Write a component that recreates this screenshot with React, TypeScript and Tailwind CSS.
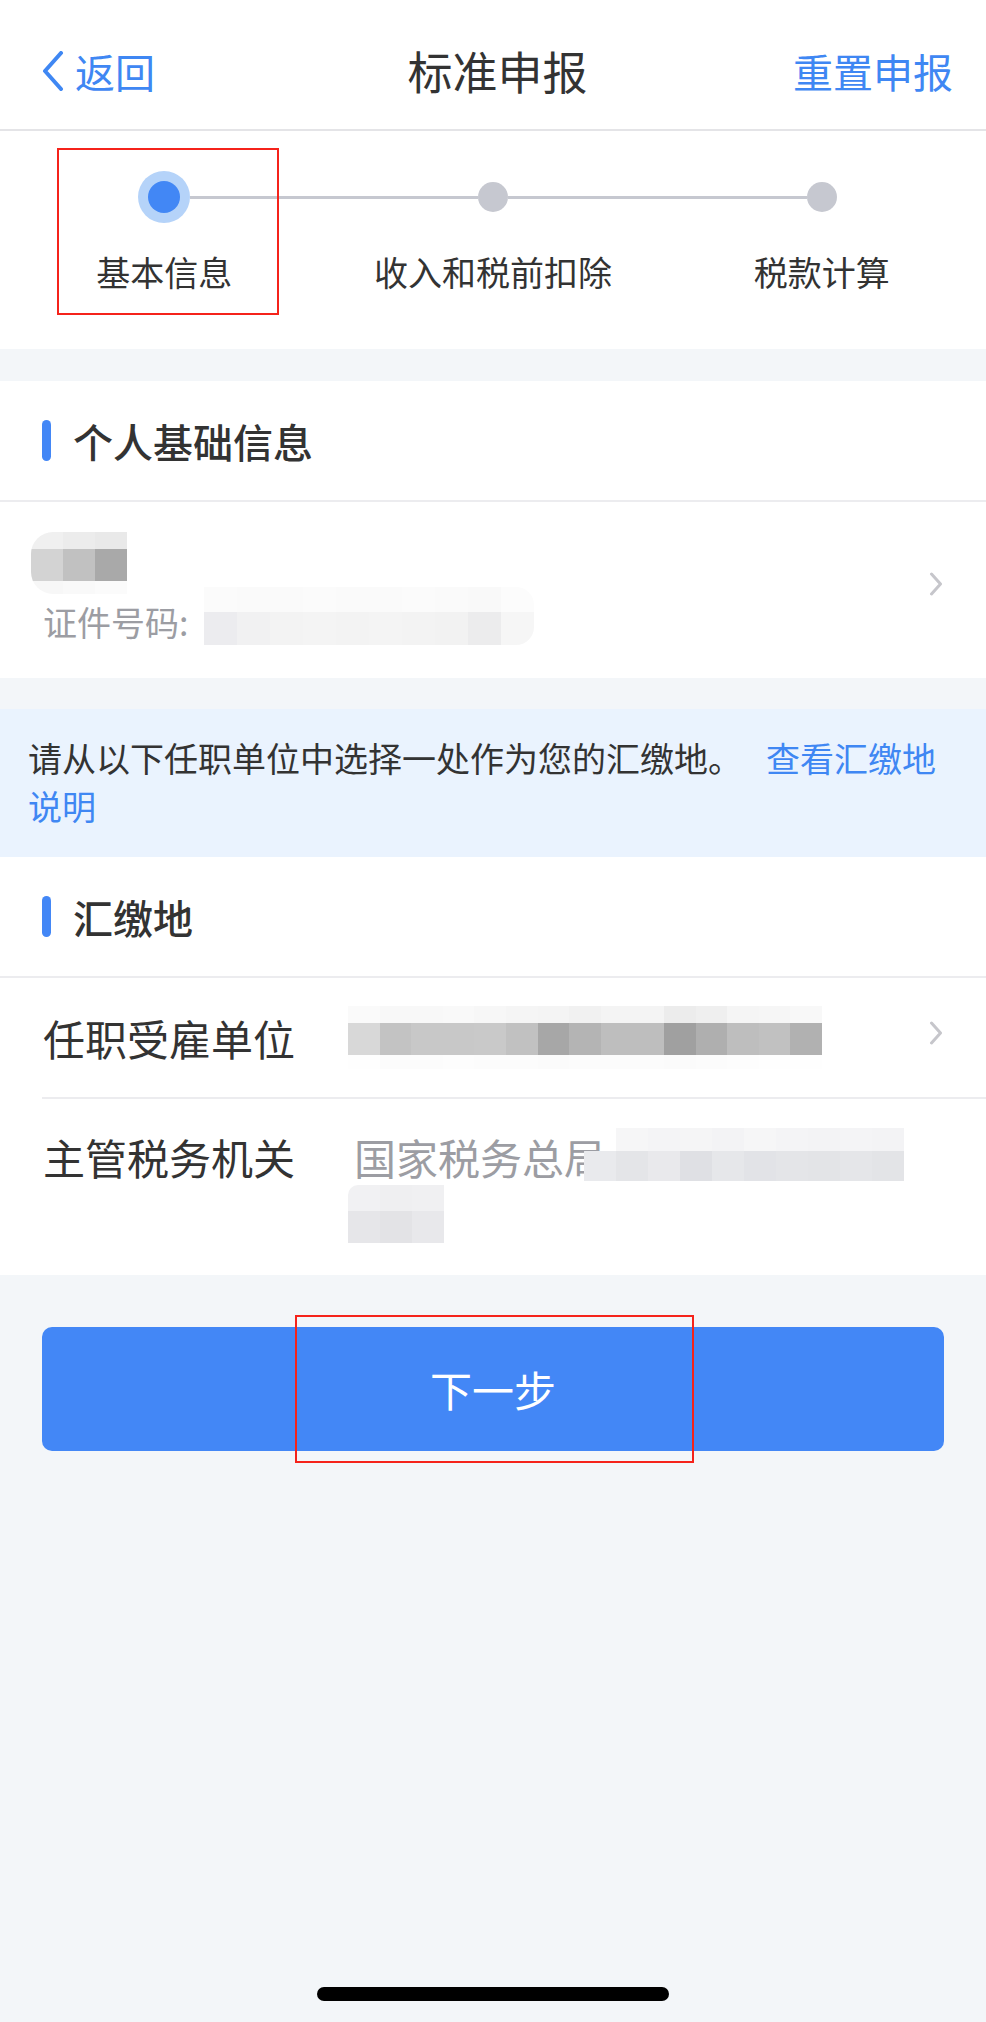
import React from "react";

const steps = ["基本信息", "收入和税前扣除", "税款计算"];

type MosaicRow = { h: string; cells: string[] };

// pixelated blocks standing in for the blurred private data
function Mosaic({
  rows,
  cell,
  className = "",
}: {
  rows: MosaicRow[];
  cell: string;
  className?: string;
}) {
  return (
    <div className={`flex flex-col overflow-hidden ${className}`}>
      {rows.map((row, i) => (
        <div key={i} className={`flex ${row.h}`}>
          {row.cells.map((c, j) => (
            <div key={j} className={`${cell} h-full ${c}`} />
          ))}
        </div>
      ))}
    </div>
  );
}

const nameRows: MosaicRow[] = [
  { h: "h-[17px]", cells: ["bg-[#f0f0f0]", "bg-[#ececec]", "bg-[#e9e9e9]"] },
  { h: "h-[32px]", cells: ["bg-[#d3d3d3]", "bg-[#c1c1c1]", "bg-[#a9a9a9]"] },
  { h: "h-[13px]", cells: ["bg-[#f7f7f7]", "bg-[#f9f9f9]", "bg-[#fbfbfb]"] },
];

const idRows: MosaicRow[] = [
  {
    h: "h-[25px]",
    cells: [
      "bg-[#fbfbfb]", "bg-[#fafafa]", "bg-[#fafafa]", "bg-[#fbfbfb]", "bg-[#fafafa]",
      "bg-[#fafafa]", "bg-[#fbfbfb]", "bg-[#fafafa]", "bg-[#f9f9f9]", "bg-[#fcfcfc]",
    ],
  },
  {
    h: "h-[33px]",
    cells: [
      "bg-[#ececef]", "bg-[#f1f1f2]", "bg-[#f3f3f3]", "bg-[#f4f4f4]", "bg-[#f3f3f3]",
      "bg-[#f4f4f4]", "bg-[#f3f3f3]", "bg-[#f2f2f2]", "bg-[#ececed]", "bg-[#f6f6f6]",
    ],
  },
];

const companyRows: MosaicRow[] = [
  {
    h: "h-[17px]",
    cells: [
      "bg-[#fafafa]", "bg-[#f8f8f8]", "bg-[#f8f8f8]", "bg-[#f9f9f9]", "bg-[#f7f7f7]",
      "bg-[#f5f5f5]", "bg-[#f4f4f4]", "bg-[#f1f1f1]", "bg-[#f4f4f4]", "bg-[#f4f4f4]",
      "bg-[#ececec]", "bg-[#efefef]", "bg-[#f5f5f5]", "bg-[#f6f6f6]", "bg-[#f8f8f8]",
    ],
  },
  {
    h: "h-[32px]",
    cells: [
      "bg-[#d8d8d8]", "bg-[#c3c3c3]", "bg-[#c8c8c8]", "bg-[#c8c8c8]", "bg-[#c9c9c9]",
      "bg-[#c1c1c1]", "bg-[#a7a7a7]", "bg-[#b4b4b4]", "bg-[#bebebe]", "bg-[#bebebe]",
      "bg-[#a0a0a0]", "bg-[#afafaf]", "bg-[#bebebe]", "bg-[#c1c1c1]", "bg-[#b1b1b1]",
    ],
  },
  {
    h: "h-[14px]",
    cells: [
      "bg-[#fefefe]", "bg-[#fcfcfc]", "bg-[#fcfcfc]", "bg-[#fdfdfd]", "bg-[#fcfcfc]",
      "bg-[#fcfcfc]", "bg-[#fbfbfb]", "bg-[#fcfcfc]", "bg-[#fcfcfc]", "bg-[#fcfcfc]",
      "bg-[#fbfbfb]", "bg-[#fcfcfc]", "bg-[#fdfdfd]", "bg-[#fefefe]", "bg-[#fefefe]",
    ],
  },
];

const officeRows: MosaicRow[] = [
  {
    h: "h-[23px]",
    cells: [
      "bg-transparent", "bg-[#f6f6f7]", "bg-[#f4f4f6]", "bg-[#f5f5f6]", "bg-[#f3f3f5]",
      "bg-[#f6f6f7]", "bg-[#f4f4f6]", "bg-[#f3f3f5]", "bg-[#f4f4f6]", "bg-[#f3f3f5]",
    ],
  },
  {
    h: "h-[30px]",
    cells: [
      "bg-[#e9eaed]", "bg-[#e4e5e8]", "bg-[#e9e9ec]", "bg-[#dfe0e4]", "bg-[#e6e7ea]",
      "bg-[#e2e3e7]", "bg-[#e4e5e8]", "bg-[#e3e4e7]", "bg-[#e5e6e9]", "bg-[#e3e4e7]",
    ],
  },
];

const office2Rows: MosaicRow[] = [
  { h: "h-[26px]", cells: ["bg-[#f1f1f3]", "bg-[#efeff1]", "bg-[#f0f0f2]"] },
  { h: "h-[32px]", cells: ["bg-[#e6e6e9]", "bg-[#e3e3e6]", "bg-[#e8e8eb]"] },
];

function BackChevron() {
  return (
    <svg width="22" height="40" viewBox="0 0 22 40" fill="none">
      <path
        d="M19 2 L3 20 L19 38"
        stroke="#3f87f3"
        strokeWidth="4"
        strokeLinecap="round"
        strokeLinejoin="round"
      />
    </svg>
  );
}

function RowChevron({ className = "" }: { className?: string }) {
  return (
    <svg width="14" height="24" viewBox="0 0 14 24" fill="none" className={className}>
      <path
        d="M2.5 2 L11.5 12 L2.5 22"
        stroke="#c6c6cb"
        strokeWidth="3"
        strokeLinecap="round"
        strokeLinejoin="round"
      />
    </svg>
  );
}

function SectionTitle({ title }: { title: string }) {
  return (
    <div className="flex h-[121px] items-center gap-[22px] border-b-2 border-[#ececef] bg-white pl-[42px]">
      <span className="h-[41px] w-[9px] rounded-full bg-[#4387f6]" />
      <span className="text-[40px] font-medium leading-none text-[#333333]">{title}</span>
    </div>
  );
}

export default function App() {
  return (
    <div className="flex min-h-[2022px] flex-col bg-[#f3f6f9] font-['Noto_Sans_CJK_SC',sans-serif]">
      {/* nav bar */}
      <div className="flex h-[131px] items-center border-b-2 border-[#e4e4e7] bg-white pt-[12px]">
        <div className="flex flex-1 items-center gap-[11px] pl-[42px] text-[40px] leading-none text-[#3f87f3]">
          <BackChevron />
          <span>返回</span>
        </div>
        <div className="text-[45px] leading-none text-[#333333]">标准申报</div>
        <div className="flex flex-1 justify-end pr-[33px] text-[40px] leading-none text-[#3f87f3]">
          重置申报
        </div>
      </div>

      {/* steps */}
      <div className="relative grid grid-cols-3 bg-white pt-[40px] pb-[53px]">
        {steps.map((s, i) => (
          <div key={s} className="flex flex-col items-center">
            <div className="flex h-[52px] w-full items-center">
              <div className={i === 0 ? "h-[3px] flex-1" : "h-[3px] flex-1 bg-[#c6c8d0]"} />
              {i === 0 ? (
                <div className="flex h-[52px] w-[52px] items-center justify-center rounded-full bg-[#b5d3f9]">
                  <div className="h-[32px] w-[32px] rounded-full bg-[#4287f5]" />
                </div>
              ) : (
                <div className="h-[30px] w-[30px] rounded-full bg-[#c6c8d0]" />
              )}
              <div className={i === 2 ? "h-[3px] flex-1" : "h-[3px] flex-1 bg-[#c6c8d0]"} />
            </div>
            <div className="mt-[25px] text-[34px] leading-[48px] text-[#333333]">{s}</div>
          </div>
        ))}
        <div className="pointer-events-none absolute left-[57px] top-[17px] h-[167px] w-[222px] border-2 border-[#f5231b]" />
      </div>

      {/* personal info */}
      <div className="mt-[32px]">
        <SectionTitle title="个人基础信息" />
        <div className="flex h-[176px] items-center justify-between bg-white pl-[43px] pr-[43px] pt-[30px] pb-[33px]">
          <div className="flex flex-col self-stretch">
            <Mosaic rows={nameRows} cell="w-[32px]" className="-ml-[12px] w-fit rounded-l-[22px]" />
            <div className="-mt-[7px] flex h-[58px] items-center gap-[16px]">
              <span className="mt-[12px] text-[34px] leading-none text-[#9c9da3]">证件号码:</span>
              <Mosaic rows={idRows} cell="w-[33px]" className="rounded-r-[18px]" />
            </div>
          </div>
          <RowChevron className="mb-[10px]" />
        </div>
      </div>

      {/* hint banner */}
      <div className="mt-[31px] bg-[#eaf3fe] px-[28px] pt-[25px] pb-[27px] text-[34px] leading-[48px] text-[#333333]">
        请从以下任职单位中选择一处作为您的汇缴地。
        <span className="ml-[24px] text-[#3f87f3]">查看汇缴地</span>
        <span className="text-[#3f87f3]">说明</span>
      </div>

      {/* payment location */}
      <div>
        <SectionTitle title="汇缴地" />
        <div className="bg-white">
          <div className="flex h-[119px] items-center pl-[43px] pr-[43px]">
            <span className="w-[305px] shrink-0 text-[42px] leading-none text-[#333333]">任职受雇单位</span>
            <div className="flex-1">
              <Mosaic rows={companyRows} cell="w-[31.6px]" className="w-fit" />
            </div>
            <RowChevron className="-mt-[10px]" />
          </div>
          <div className="ml-[42px] h-[2px] bg-[#ececef]" />
          <div className="flex h-[176px] items-start pl-[43px] pr-[43px] pt-[29px]">
            <span className="w-[305px] shrink-0 text-[42px] leading-[57px] text-[#333333]">主管税务机关</span>
            <div className="flex flex-col">
              <div className="flex h-[57px] items-start">
                <span className="ml-[6px] text-[42px] leading-[57px] text-[#9c9da3]">国家税务总局</span>
                <Mosaic rows={officeRows} cell="w-[32px]" className="-ml-[22px] rounded-tl-[24px]" />
              </div>
              <Mosaic rows={office2Rows} cell="w-[32px]" className="w-fit rounded-tl-[10px]" />
            </div>
          </div>
        </div>
      </div>

      {/* next button */}
      <div className="relative mx-[42px] mt-[52px] flex h-[124px] items-center justify-center rounded-[10px] bg-[#4387f6] text-[42px] leading-none text-white">
        下一步
        <div className="pointer-events-none absolute left-[253px] top-[-12px] h-[148px] w-[399px] border-2 border-[#f5231b]" />
      </div>

      {/* home indicator */}
      <div className="mt-auto mb-[21px] flex justify-center">
        <div className="h-[14px] w-[352px] rounded-full bg-black" />
      </div>
    </div>
  );
}
